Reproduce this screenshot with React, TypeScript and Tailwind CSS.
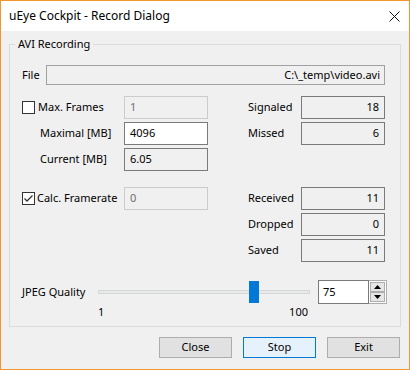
import React from 'react'

const font = "font-['Noto_Sans','Open_Sans',sans-serif]"

function Field({ value, align = 'left', variant = 'read' }: { value: string; align?: 'left' | 'right'; variant?: 'read' | 'edit' | 'off' }) {
  const look =
    variant === 'edit'
      ? 'bg-white border-[#7a7a7a] text-black'
      : variant === 'off'
        ? 'bg-[#f0f0f0] border-[#cccccc] text-[#6d6d6d]'
        : 'bg-[#f0f0f0] border-[#7a7a7a] text-black'
  return (
    <div className={`w-[84px] h-[23px] border flex items-center px-[5px] ${look} ${align === 'right' ? 'justify-end' : ''}`}>
      {value}
    </div>
  )
}

function Check({ checked }: { checked?: boolean }) {
  return (
    <div className="w-[13px] h-[13px] border border-[#333333] bg-white flex items-center justify-center shrink-0">
      {checked && (
        <svg width="11" height="11" viewBox="0 0 11 11">
          <path d="M1.5 5.5 L4 8 L9.5 2.5" fill="none" stroke="#333333" strokeWidth="1.3" />
        </svg>
      )}
    </div>
  )
}

function Stat({ label, value }: { label: string; value: string }) {
  return (
    <>
      <div className="w-[40px]" />
      <div className="w-[53px]">{label}</div>
      <Field value={value} align="right" />
    </>
  )
}

function Row({ children }: { children: React.ReactNode }) {
  return <div className="flex items-center h-[23px]">{children}</div>
}

export default function App() {
  return (
    <div className={`w-[410px] h-[370px] border border-[#f0962c] bg-[#f0f0f0] flex flex-col text-[11px] text-black ${font}`}>
      <div className="h-[30px] bg-white flex items-center justify-between pl-[8px] pr-[9px] shrink-0">
        <span className="text-[12px]">uEye Cockpit - Record Dialog</span>
        <svg width="11" height="11" viewBox="0 0 11 11">
          <path d="M0.5 0.5 L10.5 10.5 M10.5 0.5 L0.5 10.5" stroke="#111111" strokeWidth="1" />
        </svg>
      </div>

      <div className="flex-1 px-[8px] pt-[5px] flex flex-col">
        <fieldset className="border border-[#dcdcdc] pl-[12px] pb-[6px]">
          <legend className="ml-[-7px] px-[3px] h-[16px] leading-[16px]">AVI Recording</legend>

          <div className="flex items-center h-[20px] mt-[13px]">
            <div className="w-[24px]">File</div>
            <div className="w-[339px] h-[20px] border border-[#a0a0a0] bg-[#f0f0f0] flex items-center justify-end px-[4px]">
              C:\_temp\video.avi
            </div>
          </div>

          <div className="flex flex-col gap-[3px] mt-[11px]">
            <Row>
              <div className="w-[102px] flex items-center gap-[3px]">
                <Check />
                <span>Max. Frames</span>
              </div>
              <Field value="1" variant="off" />
              <Stat label="Signaled" value="18" />
            </Row>
            <Row>
              <div className="w-[102px] pl-[18px]">Maximal [MB]</div>
              <Field value="4096" variant="edit" />
              <Stat label="Missed" value="6" />
            </Row>
            <Row>
              <div className="w-[102px] pl-[18px]">Current [MB]</div>
              <Field value="6.05" />
            </Row>
          </div>

          <div className="flex flex-col gap-[3px] mt-[16px]">
            <Row>
              <div className="w-[102px] flex items-center gap-[2px]">
                <Check checked />
                <span>Calc. Framerate</span>
              </div>
              <Field value="0" variant="off" />
              <Stat label="Received" value="11" />
            </Row>
            <Row>
              <div className="w-[186px]" />
              <Stat label="Dropped" value="0" />
            </Row>
            <Row>
              <div className="w-[186px]" />
              <Stat label="Saved" value="11" />
            </Row>
          </div>

          <div className="flex items-center h-[24px] mt-[18px]">
            <div className="w-[76px]">JPEG Quality</div>
            <div className="relative w-[212px] h-[22px] flex items-center">
              <div className="w-full h-[4px] bg-[#e7eaea] border border-[#d6d6d6]" />
              <div className="absolute left-[151px] top-0 w-[10px] h-[22px] bg-[#0078d7]" />
            </div>
            <div className="ml-[8px] flex h-[24px]">
              <div className="w-[51px] h-full bg-white border border-[#7a7a7a] flex items-center px-[4px]">75</div>
              <div className="w-[18px] h-full border border-l-0 border-[#adadad] bg-white flex flex-col justify-between p-[1px]">
                <div className="h-[10px] bg-[#e6e6e6] border border-[#adadad] flex items-center justify-center">
                  <svg width="7" height="4" viewBox="0 0 7 4"><path d="M3.5 0 L7 4 L0 4 Z" fill="#000" /></svg>
                </div>
                <div className="h-[10px] bg-[#e6e6e6] border border-[#adadad] flex items-center justify-center">
                  <svg width="7" height="4" viewBox="0 0 7 4"><path d="M0 0 L7 0 L3.5 4 Z" fill="#000" /></svg>
                </div>
              </div>
            </div>
          </div>

          <div className="flex h-[16px] items-center">
            <div className="w-[76px]" />
            <div className="w-[212px] flex justify-between">
              <span>1</span>
              <span className="mr-[2px]">100</span>
            </div>
          </div>
        </fieldset>

        <div className="flex justify-end gap-[11px] mt-[10px] pr-[1px]">
          <button className="w-[73px] h-[21px] bg-[#e1e1e1] border border-[#adadad]">Close</button>
          <button className="w-[73px] h-[21px] bg-[#e5f1fb] border border-[#0078d7]">Stop</button>
          <button className="w-[73px] h-[21px] bg-[#e1e1e1] border border-[#adadad]">Exit</button>
        </div>
      </div>
    </div>
  )
}
